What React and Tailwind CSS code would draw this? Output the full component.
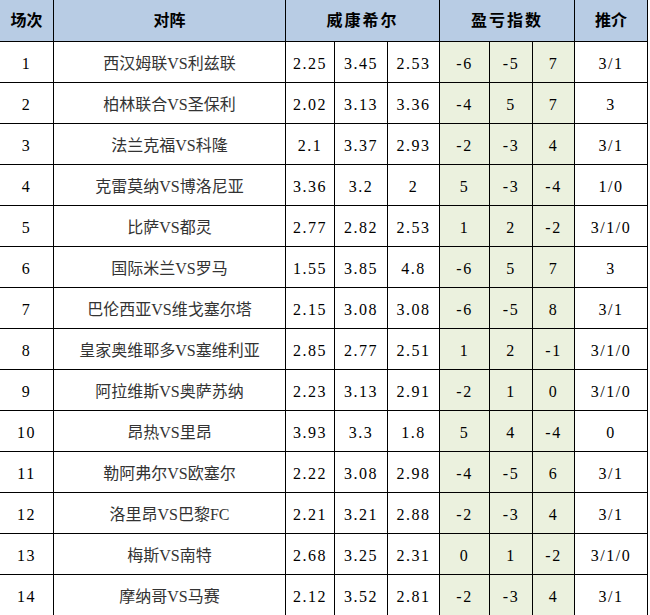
import React from "react";

const rows = [
  ["1", "西汉姆联VS利兹联", "2.25", "3.45", "2.53", "-6", "-5", "7", "3/1"],
  ["2", "柏林联合VS圣保利", "2.02", "3.13", "3.36", "-4", "5", "7", "3"],
  ["3", "法兰克福VS科隆", "2.1", "3.37", "2.93", "-2", "-3", "4", "3/1"],
  ["4", "克雷莫纳VS博洛尼亚", "3.36", "3.2", "2", "5", "-3", "-4", "1/0"],
  ["5", "比萨VS都灵", "2.77", "2.82", "2.53", "1", "2", "-2", "3/1/0"],
  ["6", "国际米兰VS罗马", "1.55", "3.85", "4.8", "-6", "5", "7", "3"],
  ["7", "巴伦西亚VS维戈塞尔塔", "2.15", "3.08", "3.08", "-6", "-5", "8", "3/1"],
  ["8", "皇家奥维耶多VS塞维利亚", "2.85", "2.77", "2.51", "1", "2", "-1", "3/1/0"],
  ["9", "阿拉维斯VS奥萨苏纳", "2.23", "3.13", "2.91", "-2", "1", "0", "3/1/0"],
  ["10", "昂热VS里昂", "3.93", "3.3", "1.8", "5", "4", "-4", "0"],
  ["11", "勒阿弗尔VS欧塞尔", "2.22", "3.08", "2.98", "-4", "-5", "6", "3/1"],
  ["12", "洛里昂VS巴黎FC", "2.21", "3.21", "2.88", "-2", "-3", "4", "3/1"],
  ["13", "梅斯VS南特", "2.68", "3.25", "2.31", "0", "1", "-2", "3/1/0"],
  ["14", "摩纳哥VS马赛", "2.12", "3.52", "2.81", "-2", "-3", "4", "3/1"],
];

const widths = [54, 232, 49, 53, 52, 50, 43, 42, 73];

const cjk = "font-['Liberation_Serif','Noto_Sans_CJK_SC',serif]";
const num = "text-[16px] tracking-[1.5px]";

export default function App() {
  return (
    <div className="w-[650px] h-[615px] overflow-hidden bg-white">
      <table className={`-ml-px -mt-px table-fixed border-collapse text-black ${cjk}`}>
        <colgroup>
          {widths.map((w, i) => (
            <col key={i} style={{ width: w }} />
          ))}
        </colgroup>
        <thead>
          <tr className="h-[42px] bg-[#b8cce4] text-[16px] font-bold">
            <th className="border border-black">场次</th>
            <th className="border border-black">对阵</th>
            <th colSpan={3} className="border border-black tracking-[2px]">威康希尔</th>
            <th colSpan={3} className="border border-black tracking-[2px]">盈亏指数</th>
            <th className="border border-black">推介</th>
          </tr>
        </thead>
        <tbody>
          {rows.map((r) => (
            <tr key={r[0]} className="h-[41px] text-center">
              <td className={`border border-black pt-[3px] ${num}`}>{r[0]}</td>
              <td className="border border-black pt-[3px] text-[16px] text-[#333]">{r[1]}</td>
              <td className={`border border-black pt-[3px] ${num}`}>{r[2]}</td>
              <td className={`border border-black pt-[3px] ${num}`}>{r[3]}</td>
              <td className={`border border-black pt-[3px] ${num}`}>{r[4]}</td>
              <td className={`border border-black pt-[3px] bg-[#ebf1de] ${num}`}>{r[5]}</td>
              <td className={`border border-black pt-[3px] bg-[#ebf1de] ${num}`}>{r[6]}</td>
              <td className={`border border-black pt-[3px] bg-[#ebf1de] ${num}`}>{r[7]}</td>
              <td className={`border border-black pt-[3px] ${num}`}>{r[8]}</td>
            </tr>
          ))}
        </tbody>
      </table>
    </div>
  );
}
